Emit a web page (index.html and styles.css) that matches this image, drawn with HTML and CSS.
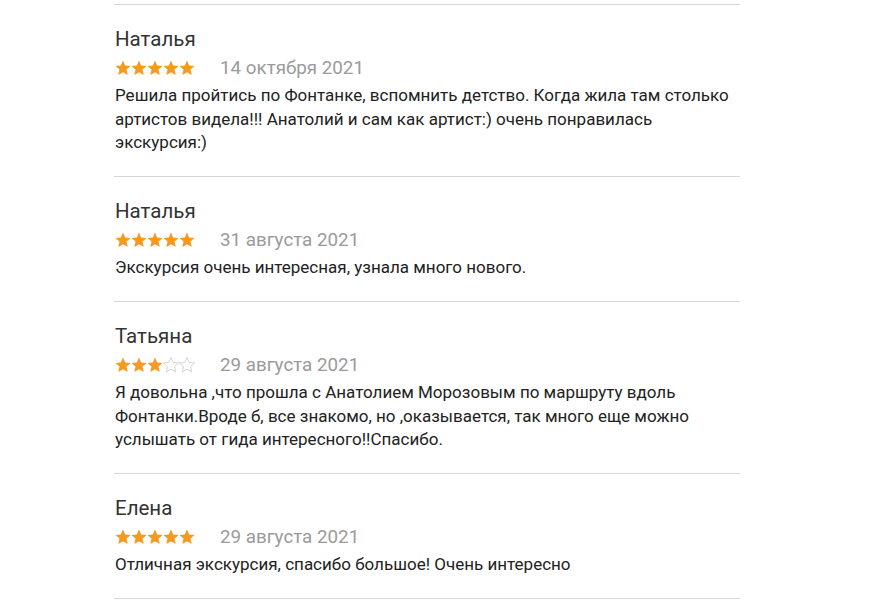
FILE: index.html
```html
<!DOCTYPE html>
<html lang="ru">
<head>
<meta charset="utf-8">
<link rel="stylesheet" href="styles.css">
</head>
<body>
<svg width="0" height="0" class="defs">
  <defs>
    <path id="star" d="M8 0.5 L10.2 5.45 L15.6 5.95 L11.5 9.6 L12.7 15 L8 12.2 L3.3 15 L4.5 9.6 L0.4 5.95 L5.8 5.45 Z"/>
  </defs>
</svg>
<div class="reviews">
  <div class="review">
    <div class="name">Наталья</div>
    <div class="meta">
      <div class="stars">
        <svg class="star full" viewBox="0 0 16 16"><use href="#star"/></svg>
        <svg class="star full" viewBox="0 0 16 16"><use href="#star"/></svg>
        <svg class="star full" viewBox="0 0 16 16"><use href="#star"/></svg>
        <svg class="star full" viewBox="0 0 16 16"><use href="#star"/></svg>
        <svg class="star full" viewBox="0 0 16 16"><use href="#star"/></svg>
      </div>
      <div class="date">14 октября 2021</div>
    </div>
    <div class="text">Решила пройтись по Фонтанке, вспомнить детство. Когда жила там столько артистов видела!!! Анатолий и сам как артист:) очень понравилась экскурсия:)</div>
  </div>
  <div class="review">
    <div class="name">Наталья</div>
    <div class="meta">
      <div class="stars">
        <svg class="star full" viewBox="0 0 16 16"><use href="#star"/></svg>
        <svg class="star full" viewBox="0 0 16 16"><use href="#star"/></svg>
        <svg class="star full" viewBox="0 0 16 16"><use href="#star"/></svg>
        <svg class="star full" viewBox="0 0 16 16"><use href="#star"/></svg>
        <svg class="star full" viewBox="0 0 16 16"><use href="#star"/></svg>
      </div>
      <div class="date">31 августа 2021</div>
    </div>
    <div class="text">Экскурсия очень интересная, узнала много нового.</div>
  </div>
  <div class="review">
    <div class="name">Татьяна</div>
    <div class="meta">
      <div class="stars">
        <svg class="star full" viewBox="0 0 16 16"><use href="#star"/></svg>
        <svg class="star full" viewBox="0 0 16 16"><use href="#star"/></svg>
        <svg class="star full" viewBox="0 0 16 16"><use href="#star"/></svg>
        <svg class="star empty" viewBox="0 0 16 16"><use href="#star"/></svg>
        <svg class="star empty" viewBox="0 0 16 16"><use href="#star"/></svg>
      </div>
      <div class="date">29 августа 2021</div>
    </div>
    <div class="text">Я довольна ,что прошла с Анатолием Морозовым по маршруту вдоль Фонтанки.Вроде б, все знакомо, но ,оказывается, так много еще можно услышать от гида интересного!!Спасибо.</div>
  </div>
  <div class="review">
    <div class="name">Елена</div>
    <div class="meta">
      <div class="stars">
        <svg class="star full" viewBox="0 0 16 16"><use href="#star"/></svg>
        <svg class="star full" viewBox="0 0 16 16"><use href="#star"/></svg>
        <svg class="star full" viewBox="0 0 16 16"><use href="#star"/></svg>
        <svg class="star full" viewBox="0 0 16 16"><use href="#star"/></svg>
        <svg class="star full" viewBox="0 0 16 16"><use href="#star"/></svg>
      </div>
      <div class="date">29 августа 2021</div>
    </div>
    <div class="text">Отличная экскурсия, спасибо большое! Очень интересно</div>
  </div>
</div>
</body>
</html>
```

FILE: styles.css
```css
html, body {
  margin: 0;
  padding: 0;
  background: #ffffff;
}
body {
  font-family: Roboto, "Liberation Sans", sans-serif;
  color: #222222;
}
.defs {
  position: absolute;
  width: 0;
  height: 0;
}
.reviews {
  width: 626px;
  margin-top: 4px;
  margin-left: 114px;
  border-top: 1px solid #d6d6d6;
}
.review {
  padding: 20px 0 21.5px 1px;
  border-bottom: 1px solid #d6d6d6;
}
.name {
  font-size: 20.5px;
  line-height: 28px;
  color: #333333;
}
.meta {
  display: flex;
  align-items: center;
  height: 30px;
  margin-bottom: 1px;
}
.stars {
  display: flex;
  gap: 0;
  width: 105px;
}
.star {
  width: 16px;
  height: 16px;
}
.star.full {
  fill: #f49a1e;
}
.star.empty {
  fill: none;
  stroke: #c8c8c8;
  stroke-width: 0.8;
}
.date {
  font-size: 18.8px;
  color: #9a9a9a;
}
.text {
  font-size: 17px;
  line-height: 23.5px;
  color: #222222;
}
```
